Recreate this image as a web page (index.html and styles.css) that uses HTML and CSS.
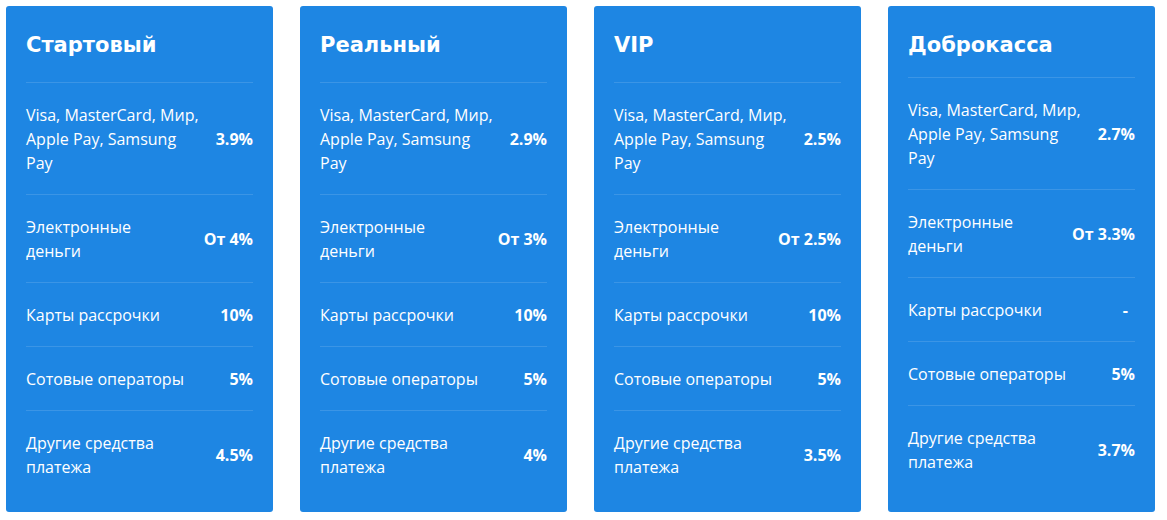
FILE: index.html
```html
<!DOCTYPE html>
<html lang="ru">
<head>
<meta charset="utf-8">
<title>Тарифы</title>
<link rel="stylesheet" href="styles.css">
</head>
<body>
<div class="plans">
  <div class="card">
    <h2 class="title">Стартовый</h2>
    <div class="row"><span class="label">Visa, MasterCard, Мир, Apple Pay, Samsung Pay</span><span class="value">3.9%</span></div>
    <div class="row"><span class="label label--narrow">Электронные деньги</span><span class="value">От 4%</span></div>
    <div class="row"><span class="label">Карты рассрочки</span><span class="value">10%</span></div>
    <div class="row"><span class="label">Сотовые операторы</span><span class="value">5%</span></div>
    <div class="row"><span class="label">Другие средства платежа</span><span class="value">4.5%</span></div>
  </div>
  <div class="card">
    <h2 class="title">Реальный</h2>
    <div class="row"><span class="label">Visa, MasterCard, Мир, Apple Pay, Samsung Pay</span><span class="value">2.9%</span></div>
    <div class="row"><span class="label label--narrow">Электронные деньги</span><span class="value">От 3%</span></div>
    <div class="row"><span class="label">Карты рассрочки</span><span class="value">10%</span></div>
    <div class="row"><span class="label">Сотовые операторы</span><span class="value">5%</span></div>
    <div class="row"><span class="label">Другие средства платежа</span><span class="value">4%</span></div>
  </div>
  <div class="card">
    <h2 class="title">VIP</h2>
    <div class="row"><span class="label">Visa, MasterCard, Мир, Apple Pay, Samsung Pay</span><span class="value">2.5%</span></div>
    <div class="row"><span class="label label--narrow">Электронные деньги</span><span class="value">От 2.5%</span></div>
    <div class="row"><span class="label">Карты рассрочки</span><span class="value">10%</span></div>
    <div class="row"><span class="label">Сотовые операторы</span><span class="value">5%</span></div>
    <div class="row"><span class="label">Другие средства платежа</span><span class="value">3.5%</span></div>
  </div>
  <div class="card">
    <h2 class="title title--short">Доброкасса</h2>
    <div class="row"><span class="label">Visa, MasterCard, Мир, Apple Pay, Samsung Pay</span><span class="value">2.7%</span></div>
    <div class="row"><span class="label label--narrow">Электронные деньги</span><span class="value">От 3.3%</span></div>
    <div class="row"><span class="label">Карты рассрочки</span><span class="value value--dash">-</span></div>
    <div class="row"><span class="label">Сотовые операторы</span><span class="value">5%</span></div>
    <div class="row"><span class="label">Другие средства платежа</span><span class="value">3.7%</span></div>
  </div>
</div>
</body>
</html>
```

FILE: styles.css
```css
* { box-sizing: border-box; }

html, body {
  margin: 0;
  padding: 0;
  background: #ffffff;
}

body {
  font-family: "Open Sans", "Liberation Sans", sans-serif;
  color: #ffffff;
}

.plans {
  display: grid;
  grid-template-columns: repeat(4, 1fr);
  column-gap: 27px;
  padding: 6px 12px 8px 6px;
  align-items: stretch;
}

.card {
  background: #1e86e3;
  border-radius: 3px;
  padding: 0 20px 14px 20px;
  display: flex;
  flex-direction: column;
}

.title {
  margin: 0;
  padding: 27px 0 0 0;
  margin-bottom: 25px;
  font-family: "DejaVu Sans", "Open Sans", sans-serif;
  font-weight: 700;
  font-size: 21px;
  line-height: 24px;
}

.title--short {
  margin-bottom: 20px;
}

.row {
  display: flex;
  align-items: center;
  justify-content: space-between;
  gap: 10px;
  border-top: 1px solid rgba(255, 255, 255, 0.13);
  padding: 20px 0 19px 0;
  font-size: 16px;
  line-height: 24px;
}

.label {
  flex: 1 1 auto;
}

.label--narrow {
  max-width: 140px;
}

.value {
  flex: 0 0 auto;
  font-weight: 700;
  text-align: right;
}

.value--dash {
  padding-right: 7px;
}
```
